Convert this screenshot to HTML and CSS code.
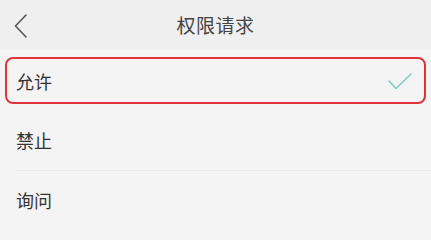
FILE: index.html
```html
<!DOCTYPE html>
<html lang="zh-CN">
<head>
<meta charset="utf-8">
<title>权限请求</title>
<link rel="stylesheet" href="styles.css">
</head>
<body>
<div class="page">
  <header class="header">
    <div class="back">
      <svg width="16" height="26" viewBox="0 0 16 26"><path d="M13 2 L2.5 13 L13 24" fill="none" stroke="#555" stroke-width="1.6" stroke-linecap="round" stroke-linejoin="round"/></svg>
    </div>
    <div class="title">权限请求</div>
    <div class="spacer"></div>
  </header>
  <div class="list">
    <div class="row-wrap">
      <div class="row selected">
        <span class="label">允许</span>
        <svg class="check" width="24" height="17" viewBox="0 0 24 17"><path d="M1 8 L8 15.5 L23 1" fill="none" stroke="#7dd0c0" stroke-width="1.6" stroke-linecap="round" stroke-linejoin="round"/></svg>
      </div>
    </div>
    <div class="row plain divided"><span class="label">禁止</span></div>
    <div class="row plain"><span class="label">询问</span></div>
  </div>
</div>
</body>
</html>
```
FILE: styles.css
```css
html, body {
  margin: 0;
  padding: 0;
  background: #f4f4f4;
}
.page {
  width: 431px;
  height: 230px;
  overflow: hidden;
  font-family: "Noto Sans CJK SC", "Noto Sans", sans-serif;
  color: #333;
}
.header {
  height: 50px;
  background: #efefef;
  display: grid;
  grid-template-columns: 60px 1fr 60px;
  align-items: center;
}
.back {
  display: flex;
  align-items: center;
  padding-left: 13px;
  padding-top: 1px;
}
.back svg { display: block; }
.title {
  text-align: center;
  font-size: 19px;
  color: #444;
  letter-spacing: 0.5px;
  margin-top: -2px;
}
.list {
  display: flex;
  flex-direction: column;
}
.row-wrap {
  padding: 7px 5px 8px;
}
.row {
  display: flex;
  align-items: center;
  justify-content: space-between;
  box-sizing: border-box;
}
.row.selected {
  height: 47px;
  border: 2px solid #e2323f;
  border-radius: 8px;
  padding: 0 12px 0 9px;
}
.check { display: block; margin-top: 1px; }
.row.plain {
  height: 59px;
  margin-left: 16px;
  padding-bottom: 2px;
}
.row.divided {
  border-bottom: 1px solid #e8e8e8;
}
.label {
  font-size: 18px;
  color: #333;
}
```
